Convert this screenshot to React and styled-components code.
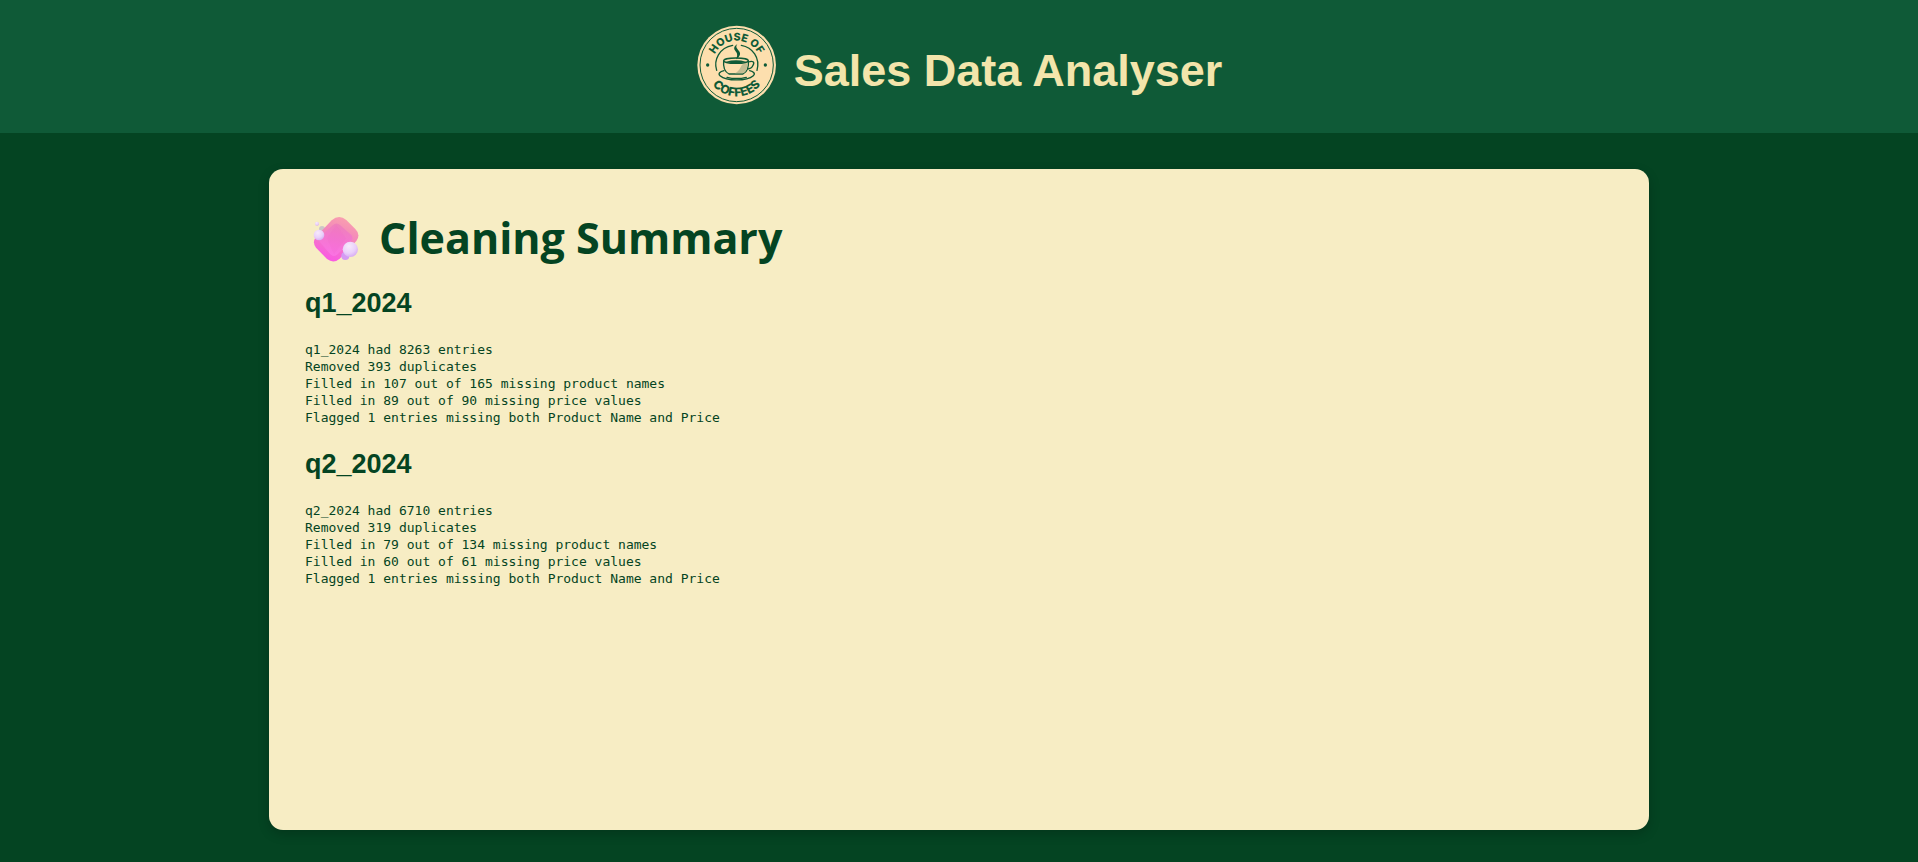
import React from 'react';
import styled, { createGlobalStyle } from 'styled-components';

const GlobalStyle = createGlobalStyle`
  *, *::before, *::after { box-sizing: border-box; }
  body {
    margin: 0;
    background: #044422;
    color: #044422;
    font-family: Arial, "Liberation Sans", sans-serif;
  }
`;

const Page = styled.div`
  display: flex;
  flex-direction: column;
  min-height: 100vh;
`;

const Header = styled.header`
  display: flex;
  justify-content: center;
  align-items: center;
  gap: 18px;
  padding: 25px 24px 28px;
  background: #0f5a37;
`;

const Logo = styled.svg`
  flex: none;
  width: 80px;
  height: 80px;
`;

const AppTitle = styled.h1`
  margin: 0;
  padding-top: 12px;
  color: #f3e5ab;
  font-size: 45px;
  line-height: 52px;
`;

const Main = styled.main`
  flex: 1;
  display: flex;
  justify-content: center;
  padding: 36px 32px 32px;
`;

const Card = styled.section`
  width: 100%;
  max-width: 1380px;
  padding: 36px;
  border-radius: 14px;
  background: #f7edc4;
  box-shadow: 0 4px 12px rgba(0, 0, 0, 0.2);
`;

const CardTitle = styled.h2`
  display: flex;
  align-items: center;
  gap: 14px;
  margin: 0;
  padding-top: 6px;
  font-family: "Segoe UI", "Open Sans", sans-serif;
  font-size: 43px;
  line-height: 54px;
`;

const SoapIcon = styled.svg`
  flex: none;
  width: 60px;
  height: 48px;
`;

const Report = styled.article`
  margin-top: 22px;
`;

const ReportName = styled.h3`
  margin: 0;
  font-size: 27px;
  line-height: 32px;
`;

const ReportLog = styled.pre`
  margin: 22px 0 0;
  font-family: Consolas, "DejaVu Sans Mono", monospace;
  font-size: 13px;
  line-height: 17px;
  white-space: pre-wrap;
`;

const reports = [
  {
    name: 'q1_2024',
    lines: [
      'q1_2024 had 8263 entries',
      'Removed 393 duplicates',
      'Filled in 107 out of 165 missing product names',
      'Filled in 89 out of 90 missing price values',
      'Flagged 1 entries missing both Product Name and Price',
    ],
  },
  {
    name: 'q2_2024',
    lines: [
      'q2_2024 had 6710 entries',
      'Removed 319 duplicates',
      'Filled in 79 out of 134 missing product names',
      'Filled in 60 out of 61 missing price values',
      'Flagged 1 entries missing both Product Name and Price',
    ],
  },
];

function CoffeeLogo() {
  return (
    <Logo viewBox="33 30 240 240" role="img" aria-label="House of Coffees">
      <defs>
        <path id="arcTop" d="M82 150 A73 73 0 0 1 228 150" />
        <path id="arcBottom" d="M61 150 A94 94 0 0 0 249 150" />
      </defs>
      <circle cx="155" cy="150" r="118" fill="#fddfae" />
      <circle cx="155" cy="150" r="110" fill="none" stroke="#0f5a37" strokeWidth="3" />
      <g fill="#0f5a37" fontFamily="Inter, sans-serif" fontWeight="800">
        <text textAnchor="middle" fontSize="32">
          <textPath href="#arcTop" startOffset="50%">HOUSE OF</textPath>
        </text>
        <text textAnchor="middle" fontSize="36">
          <textPath href="#arcBottom" startOffset="50%">COFFEES</textPath>
        </text>
        <circle cx="68" cy="150" r="5" />
        <circle cx="241" cy="150" r="5" />
      </g>
      <g fill="none" stroke="#0f5a37" strokeWidth="4" strokeLinecap="round" strokeLinejoin="round">
        <path d="M95 166 C85 135 103 98 143 91" />
        <path d="M169 91 C203 97 226 129 216 166" />
        <path d="M117 167 C105 170 98 176 105 182 C125 199 185 199 205 182 C212 176 206 170 194 167" />
        <path d="M126 187 C142 191 168 191 184 187" />
        <path d="M190 141 C203 136 210 141 204 151 C201 159 194 162 187 162" />
        <path d="M116 137 C114 158 121 172 132 177 H174 C185 172 192 158 190 137" fill="#fddfae" />
      </g>
      <path d="M187 145 C188 161 183 171 173 175 H150 C166 167 166 154 173 148 Z" fill="#c2bd92" />
      <ellipse cx="153" cy="137" rx="37" ry="8" fill="#fddfae" stroke="#0f5a37" strokeWidth="4" />
      <path d="M123 140 Q153 132 183 140 Q153 149 123 140 Z" fill="#0f5a37" />
      <path
        d="M157 87 C142 97 148 104 154 112 C158 118 157 125 153 133 C166 124 168 116 162 108 C155 99 151 96 157 87 Z"
        fill="#0f5a37"
      />
    </Logo>
  );
}

function Soap() {
  return (
    <SoapIcon viewBox="18 24 180 144" aria-hidden="true">
      <defs>
        <linearGradient id="soapSide" x1="0.7" y1="0" x2="0.3" y2="1">
          <stop offset="0" stopColor="#f9a0ae" />
          <stop offset="0.45" stopColor="#f283bd" />
          <stop offset="1" stopColor="#fa56e6" />
        </linearGradient>
        <linearGradient id="soapTop" x1="0.6" y1="0" x2="0.4" y2="1">
          <stop offset="0" stopColor="#ee82b8" />
          <stop offset="0.5" stopColor="#f477d0" />
          <stop offset="1" stopColor="#fb72e4" />
        </linearGradient>
        <radialGradient id="bubble" cx="0.4" cy="0.3" r="0.75">
          <stop offset="0" stopColor="#f7eafc" />
          <stop offset="0.6" stopColor="#ead0fa" />
          <stop offset="1" stopColor="#d5a8f2" />
        </radialGradient>
      </defs>
      <circle cx="69" cy="69" r="9" fill="#cdc6c8" />
      <path
        d="M98 43 Q120 24 142 42 L169 69 Q186 86 172 105 L122 158 Q104 174 84 159 L51 125 Q39 110 50 94 Z"
        fill="url(#soapSide)"
      />
      <path
        d="M101 58 Q112 47 123 57 L157 87 Q164 96 157 105 L114 146 Q104 154 94 145 L63 109 Q57 100 64 92 Z"
        fill="url(#soapTop)"
      />
      <path d="M112 57 L141 97 L105 145 L84 97 Z" fill="#f05fcb" opacity="0.15" />
      <circle cx="139" cy="150" r="12" fill="#d59af3" />
      <circle cx="154" cy="130" r="23" fill="url(#bubble)" />
      <circle cx="60" cy="87" r="16" fill="url(#bubble)" />
      <circle cx="54" cy="53" r="6" fill="url(#bubble)" />
    </SoapIcon>
  );
}

export default function App() {
  return (
    <Page>
      <GlobalStyle />
      <Header>
        <CoffeeLogo />
        <AppTitle>Sales Data Analyser</AppTitle>
      </Header>
      <Main>
        <Card>
          <CardTitle>
            <Soap />
            Cleaning Summary
          </CardTitle>
          {reports.map((report) => (
            <Report key={report.name}>
              <ReportName>{report.name}</ReportName>
              <ReportLog>{report.lines.join('\n')}</ReportLog>
            </Report>
          ))}
        </Card>
      </Main>
    </Page>
  );
}
